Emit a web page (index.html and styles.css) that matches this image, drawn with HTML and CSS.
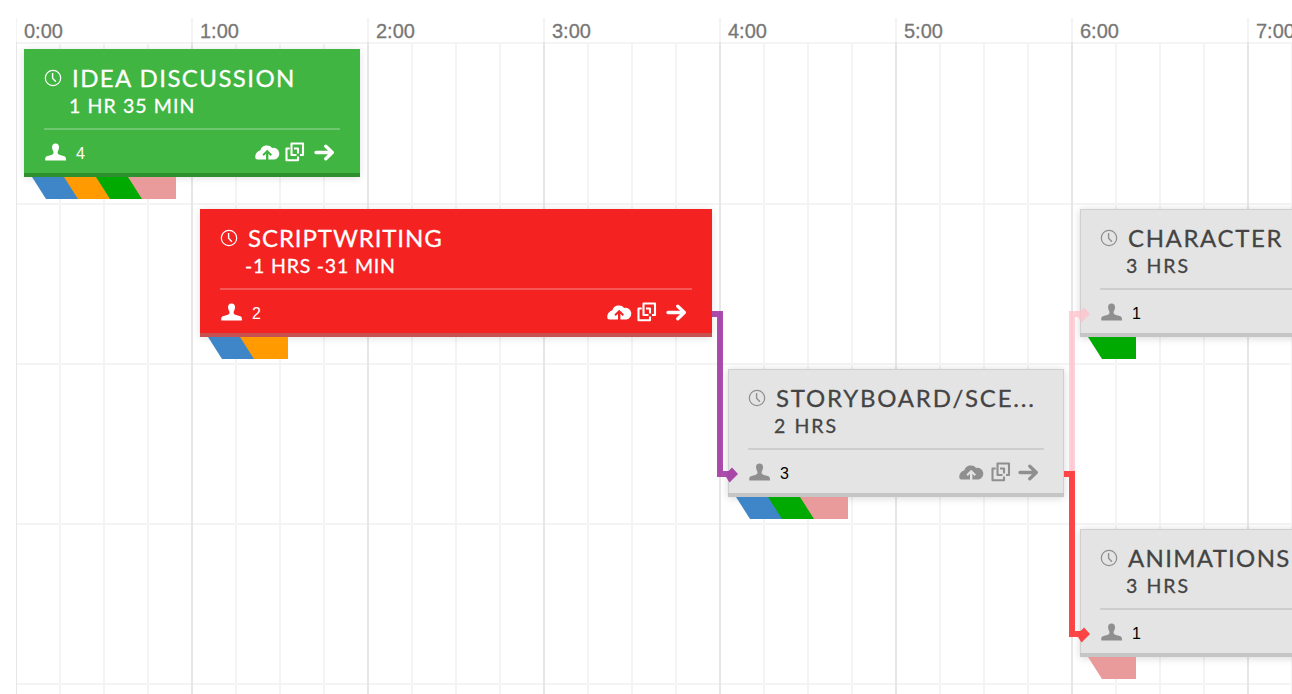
FILE: index.html
```html
<!DOCTYPE html>
<html lang="en">
<head>
<meta charset="utf-8">
<title>Production schedule</title>
<link rel="stylesheet" href="styles.css">
</head>
<body>
<svg class="defs" aria-hidden="true">
  <symbol id="clock" viewBox="0 0 18 18"><circle cx="9" cy="9" r="7.7" fill="none" stroke="currentColor" stroke-width="1.2"/><path d="M8.6 4v5.2l3.3 3.5" fill="none" stroke="currentColor" stroke-width="1.4"/></symbol>
  <symbol id="person" viewBox="0 0 22 18"><path d="M10.5 0.4c2.6 0 3.8 1.7 3.5 4.4c-.1 1.700-.9 2.700-1.300 3.900c-.3 1.400.1 2.500 1.600 3.100l5 1.500c1.500.5 1.700 1.500 1.700 4.300H.2c0-2.800.2-3.800 1.700-4.300l5-1.500c1.400-.6 1.800-1.700 1.500-3.100C8 7.500 7.200 6.500 7.100 4.800C6.800 2.100 8 .4 10.500.4z" fill="currentColor"/></symbol>
  <symbol id="cloud" viewBox="0 0 26 16"><path d="M2.500 15.500H11V9.800L8.800 12L7.400 10.600L12.200 5.800L17 10.600L15.600 12L13.400 9.800V15.500H19.500a5.500 5.500 0 1 0-2.300-11.600A6.900 6.900 0 0 0 5.400 6.200C1.500 7.200-.6 11 .6 14.700Q1.300 15.500 2.500 15.500z" fill="currentColor"/></symbol>
  <symbol id="copy" viewBox="0 0 20 20"><g fill="none" stroke="currentColor" stroke-width="2.100" stroke-linejoin="round"><path d="M6.500 11V1.500H18V13H15M4.700 6.500H1.500V18.200H13V14.600M9 6.500H13V11.500M6.500 10V13H11.500"/></g></symbol>
  <symbol id="arrow" viewBox="0 0 21 17"><path d="M2 8.500H18M11.800 2.200L18.300 8.500L11.800 14.800" fill="none" stroke="currentColor" stroke-width="3.300" stroke-linecap="round" stroke-linejoin="round"/></symbol>
</svg>
<main class="timeline">
  <header class="hours"><span>0:00</span><span>1:00</span><span>2:00</span><span>3:00</span><span>4:00</span><span>5:00</span><span>6:00</span><span>7:00</span></header>
  <div class="grid"></div>

  <article class="task idea">
    <div class="body">
      <h2><svg class="clock"><use href="#clock"/></svg><span class="name">IDEA DISCUSSION</span></h2>
      <p><span class="time">1 HR 35 MIN</span></p>
      <footer><svg class="person"><use href="#person"/></svg><b>4</b><svg class="cloud"><use href="#cloud"/></svg><svg class="copy"><use href="#copy"/></svg><svg class="arrow"><use href="#arrow"/></svg></footer>
    </div>
    <div class="tags"><i class="blue"></i><i class="orange"></i><i class="green"></i><i class="pink"></i></div>
  </article>

  <article class="task script">
    <div class="body">
      <h2><svg class="clock"><use href="#clock"/></svg><span class="name">SCRIPTWRITING</span></h2>
      <p><span class="time">-1 HRS -31 MIN</span></p>
      <footer><svg class="person"><use href="#person"/></svg><b>2</b><svg class="cloud"><use href="#cloud"/></svg><svg class="copy"><use href="#copy"/></svg><svg class="arrow"><use href="#arrow"/></svg></footer>
    </div>
    <div class="tags"><i class="blue"></i><i class="orange"></i></div>
  </article>

  <article class="task pending story">
    <div class="body">
      <h2><svg class="clock"><use href="#clock"/></svg><span class="name">STORYBOARD/SCE...</span></h2>
      <p><span class="time">2 HRS</span></p>
      <footer><svg class="person"><use href="#person"/></svg><b>3</b><svg class="cloud"><use href="#cloud"/></svg><svg class="copy"><use href="#copy"/></svg><svg class="arrow"><use href="#arrow"/></svg></footer>
    </div>
    <div class="tags"><i class="blue"></i><i class="green"></i><i class="pink"></i></div>
  </article>

  <article class="task pending character">
    <div class="body">
      <h2><svg class="clock"><use href="#clock"/></svg><span class="name">CHARACTER</span></h2>
      <p><span class="time">3 HRS</span></p>
      <footer><svg class="person"><use href="#person"/></svg><b>1</b></footer>
    </div>
    <div class="tags"><i class="green"></i></div>
  </article>

  <article class="task pending animations">
    <div class="body">
      <h2><svg class="clock"><use href="#clock"/></svg><span class="name">ANIMATIONS</span></h2>
      <p><span class="time">3 HRS</span></p>
      <footer><svg class="person"><use href="#person"/></svg><b>1</b></footer>
    </div>
    <div class="tags"><i class="pink"></i></div>
  </article>

  <svg class="links" viewBox="0 0 1292 694">
    <path class="link-purple" d="M712 311H723V471H728.500L732 467.500L738 474L729.500 482.500L726 477H717V317H712z"/>
    <path class="link-pink" d="M1069 471V311H1080.500L1084 307.500L1090 314L1081.500 322.500L1078 317H1075V471z"/>
    <path class="link-red" d="M1064 471H1075V631H1080.500L1084 627.500L1090 634L1081.500 642.500L1078 637H1069V477H1064z"/>
  </svg>
</main>
</body>
</html>
```
FILE: styles.css
```css
body { margin: 0; background: #fff; }
.defs { position: absolute; width: 0; height: 0; }
.timeline { position: relative; width: 1292px; height: 694px; overflow: hidden; display: flex; flex-direction: column; font-family: Lato, "Noto Sans", sans-serif; }

.hours { display: flex; height: 24px; margin: 18px 0 0 15px; flex: none; }
.hours span { flex: none; box-sizing: border-box; width: 176px; padding-left: 7px; border-left: 2px solid #f4f4f4; font: 20px/26px "Liberation Sans", Arial, sans-serif; color: #777; -webkit-text-stroke: .3px #777; }
.hours span:first-child { width: 175px; margin-left: 1px; border-left-width: 1px; }

.grid { flex: 1; margin-left: 16px; border-left: 1px solid #e6e6e6;
  background:
    repeating-linear-gradient(90deg, transparent 0 174px, #e6e6e6 174px 176px),
    repeating-linear-gradient(180deg, #f4f4f4 0 2px, transparent 2px 160px) 0 161px / 100% 100% no-repeat,
    linear-gradient(#f4f4f4, #f4f4f4) 0 0 / 100% 2px no-repeat,
    repeating-linear-gradient(90deg, transparent 0 42px, #f4f4f4 42px 44px); }

.task { position: absolute; width: 336px; color: #fff; }
.body { box-sizing: border-box; height: 128px; padding: 14px 20px 0; border-bottom: 4px solid; box-shadow: 0 1px 8px rgba(0,0,0,.12); }
.idea { left: 24px; top: 49px; }
.script { left: 200px; top: 209px; width: 512px; }
.story { left: 728px; top: 369px; }
.character { left: 1080px; top: 209px; width: 512px; }
.animations { left: 1080px; top: 529px; width: 512px; }
.idea .body { background: #41b541; border-color: #2e8f2e; }
.script .body { background: #f52222; border-color: #c75050; }
.pending .body { background: #e4e4e4; border-color: #c5c5c5; box-shadow: inset 1px 1px #cfcfcf, inset -1px 0 #cfcfcf, 0 1px 8px rgba(0,0,0,.16); }
.pending { color: #8f8f8f; }

h2 { display: flex; align-items: center; box-sizing: border-box; height: 31px; margin: 0; padding-bottom: 1px; font-size: 24px; font-weight: 400; line-height: 30px; white-space: nowrap; }
p { height: 24px; margin: 0; padding-left: 25px; font-size: 19.500px; line-height: 24px; white-space: nowrap; }
.name, .time { -webkit-text-stroke: .3px currentColor; }
.pending .name, .pending .time { color: #444; }
.pending p { padding-left: 26px; }

/* Tracking is tuned per card title and duration */
.idea .name { letter-spacing: 1.430px; }
.idea .time { letter-spacing: 1.100px; }
.script .name { letter-spacing: .920px; }
.script .time { letter-spacing: .800px; }
.story .name { letter-spacing: 1.790px; }
.pending .time { letter-spacing: 2.050px; }
.character .name { letter-spacing: 1.620px; }
.animations .name { letter-spacing: 1.300px; }

footer { display: flex; align-items: flex-start; margin-top: 10px; padding-top: 13px; height: 32px; border-top: 2px solid rgba(255,255,255,.24); }
.pending footer { border-color: #cdcdcd; }
b { width: 16px; margin: 1px auto 0 9px; font: 400 16px/20px "Liberation Sans", Arial, sans-serif; }
.pending b { color: #000; }

.clock { width: 18px; height: 18px; margin-right: 10px; }
.person { width: 22px; height: 18px; margin-left: 1px; }
.cloud { width: 26px; height: 16px; margin-top: 1px; }
.copy { width: 20px; height: 20px; margin: -1px 1px 0 4px; }
.pending .copy { margin: -1px -1px 0 6px; }
.arrow { width: 21px; height: 17px; margin: 1px 5px 0 8px; }

.tags { display: flex; height: 22px; margin-left: 8px; }
.tags i { width: 46px; height: 22px; margin-right: -14px; clip-path: polygon(0 0, 100% 0, 100% 100%, 14px 100%); }
.tags i:last-child { width: 48px; }
.blue { background: #3f86c8; }
.orange { background: #ff9a00; }
.green { background: #00aa00; }
.pink { background: #e99a9a; }

.links { position: absolute; inset: 0; width: 1292px; height: 694px; }
.link-purple { fill: #9a259a; fill-opacity: .82; }
.link-pink { fill: #ffc0cb; fill-opacity: .75; }
.link-red { fill: #ff3232; fill-opacity: .9; }
```
